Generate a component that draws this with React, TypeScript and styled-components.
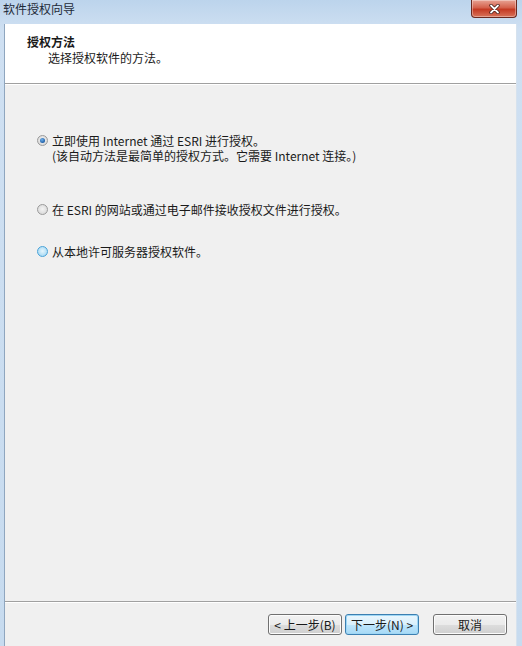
import React from 'react';
import styled, { createGlobalStyle } from 'styled-components';

const GlobalStyle = createGlobalStyle`
  html, body {
    margin: 0;
    padding: 0;
    background: #ffffff;
  }
  body {
    font-family: "Noto Sans CJK SC", "Liberation Sans", sans-serif;
    font-size: 12px;
    color: #1a1a1a;
  }
`;

const Frame = styled.div`
  width: 522px;
  height: 646px;
  display: flex;
  flex-direction: column;
  background: linear-gradient(180deg, #bcd4ec 0%, #cfe0f2 30px, #c7dbef 100%);
  box-sizing: border-box;
  overflow: hidden;
`;

const TitleBar = styled.div`
  height: 24px;
  display: flex;
  align-items: flex-start;
  justify-content: space-between;
  padding-left: 3px;
  padding-right: 5px;
  flex-shrink: 0;
`;

const TitleText = styled.div`
  font-size: 12px;
  line-height: 12px;
  margin-top: 3px;
  color: #1e2a38;
`;

const CloseButton = styled.div`
  width: 46px;
  height: 18px;
  border: 1px solid #6b2a20;
  border-top: none;
  border-radius: 0 0 4px 4px;
  background: linear-gradient(180deg, #e8a394 0%, #d4614c 45%, #c43a23 55%, #d8735a 100%);
  display: flex;
  align-items: center;
  justify-content: center;
  box-sizing: border-box;
  box-shadow: inset 0 0 0 1px rgba(255, 255, 255, 0.35);
`;

const Client = styled.div`
  flex: 1;
  margin: 0 5px 0 4px;
  display: flex;
  flex-direction: column;
  background: #f0f0f0;
  border-left: 1px solid #8fa6bf;
  border-right: 1px solid #d6e2ee;
`;

const Header = styled.div`
  height: 60px;
  background: #ffffff;
  border-bottom: 1px solid #a0a0a0;
  box-shadow: 0 1px 0 #ffffff;
  padding: 10px 0 0 22px;
  box-sizing: border-box;
`;

const HeaderTitle = styled.div`
  font-weight: bold;
  font-size: 12px;
  line-height: 16px;
`;

const HeaderSub = styled.div`
  font-size: 12px;
  line-height: 16px;
  padding-left: 21px;
`;

const Body = styled.div`
  flex: 1;
  padding: 49px 0 0 32px;
  display: flex;
  flex-direction: column;
`;

const Option = styled.label<{ $gap: number }>`
  display: flex;
  align-items: flex-start;
  gap: 4px;
  margin-bottom: ${p => p.$gap}px;
  line-height: 15px;
`;

const Radio = styled.span<{ $checked?: boolean; $hover?: boolean }>`
  width: 11px;
  height: 11px;
  border-radius: 50%;
  margin-top: 2px;
  flex-shrink: 0;
  box-sizing: border-box;
  border: 1px solid ${p => (p.$hover ? '#4aa3d8' : '#9a9a9a')};
  background: ${p =>
    p.$hover
      ? 'radial-gradient(circle at 50% 45%, #e6f6fd 0%, #b6e0f6 60%, #8fcbef 100%)'
      : 'radial-gradient(circle at 50% 45%, #f4f4f4 0%, #dcdcdc 70%, #c8c8c8 100%)'};
  display: flex;
  align-items: center;
  justify-content: center;
  &::after {
    content: '';
    display: ${p => (p.$checked ? 'block' : 'none')};
    width: 5px;
    height: 5px;
    border-radius: 50%;
    background: radial-gradient(circle at 40% 35%, #6fb0ea 0%, #1f5fa8 70%, #123e78 100%);
  }
`;

const OptionText = styled.div``;

const Footer = styled.div`
  height: 44px;
  border-top: 1px solid #a0a0a0;
  box-shadow: inset 0 1px 0 #ffffff;
  display: flex;
  align-items: center;
  justify-content: flex-end;
  padding-right: 9px;
  flex-shrink: 0;
`;

const Button = styled.div<{ $focused?: boolean; $space?: number }>`
  width: 74px;
  height: 21px;
  box-sizing: border-box;
  border: 1px solid ${p => (p.$focused ? '#3c7fb1' : '#707070')};
  border-radius: 3px;
  background: ${p =>
    p.$focused
      ? 'linear-gradient(180deg, #eaf6fd 0%, #d9f0fc 50%, #bee6fd 51%, #a7d9f5 100%)'
      : 'linear-gradient(180deg, #f2f2f2 0%, #ebebeb 50%, #dddddd 51%, #cfcfcf 100%)'};
  box-shadow: inset 0 0 0 1px ${p => (p.$focused ? '#9fd7f5' : '#fcfcfc')};
  display: flex;
  align-items: center;
  justify-content: center;
  font-size: 12px;
  margin-left: ${p => p.$space ?? 0}px;
  white-space: nowrap;
`;

const options = [
  {
    lines: ['立即使用 Internet 通过 ESRI 进行授权。', '(该自动方法是最简单的授权方式。它需要 Internet 连接。)'],
    checked: true,
    gap: 39,
  },
  {
    lines: ['在 ESRI 的网站或通过电子邮件接收授权文件进行授权。'],
    gap: 27,
  },
  {
    lines: ['从本地许可服务器授权软件。'],
    hover: true,
    gap: 0,
  },
];

const App = () => {
  return (
    <>
      <GlobalStyle />
      <Frame>
        <TitleBar>
          <TitleText>软件授权向导</TitleText>
          <CloseButton>
            <svg width="11" height="10" viewBox="0 0 11 10">
              <path d="M2 1.5 L9 8.5 M9 1.5 L2 8.5" stroke="#3a1410" strokeWidth="3.2" strokeLinecap="round" />
              <path d="M2 1.5 L9 8.5 M9 1.5 L2 8.5" stroke="#ffffff" strokeWidth="1.8" strokeLinecap="round" />
            </svg>
          </CloseButton>
        </TitleBar>
        <Client>
          <Header>
            <HeaderTitle>授权方法</HeaderTitle>
            <HeaderSub>选择授权软件的方法。</HeaderSub>
          </Header>
          <Body>
            {options.map((o, i) => (
              <Option key={i} $gap={o.gap}>
                <Radio $checked={o.checked} $hover={o.hover} />
                <OptionText>
                  {o.lines.map(l => (
                    <div key={l}>{l}</div>
                  ))}
                </OptionText>
              </Option>
            ))}
          </Body>
          <Footer>
            <Button>&lt; 上一步(B)</Button>
            <Button $focused $space={3}>下一步(N) &gt;</Button>
            <Button $space={14}>取消</Button>
          </Footer>
        </Client>
      </Frame>
    </>
  );
};

export default App;
